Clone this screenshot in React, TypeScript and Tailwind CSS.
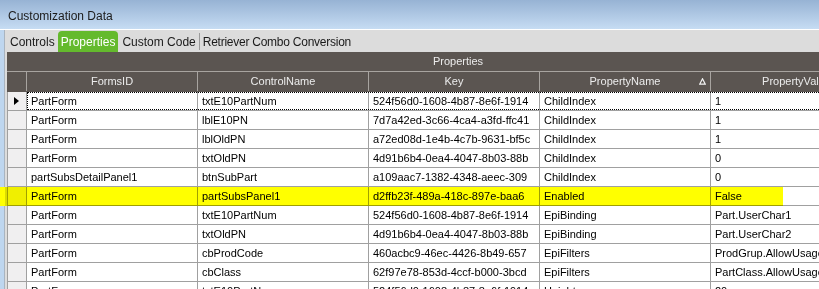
import React from "react";

type Row = [string, string, string, string, string];

const rows: Row[] = [
  ["PartForm", "txtE10PartNum", "524f56d0-1608-4b87-8e6f-1914", "ChildIndex", "1"],
  ["PartForm", "lblE10PN", "7d7a42ed-3c66-4ca4-a3fd-ffc41", "ChildIndex", "1"],
  ["PartForm", "lblOldPN", "a72ed08d-1e4b-4c7b-9631-bf5c", "ChildIndex", "1"],
  ["PartForm", "txtOldPN", "4d91b6b4-0ea4-4047-8b03-88b", "ChildIndex", "0"],
  ["partSubsDetailPanel1", "btnSubPart", "a109aac7-1382-4348-aeec-309", "ChildIndex", "0"],
  ["PartForm", "partSubsPanel1", "d2ffb23f-489a-418c-897e-baa6", "Enabled", "False"],
  ["PartForm", "txtE10PartNum", "524f56d0-1608-4b87-8e6f-1914", "EpiBinding", "Part.UserChar1"],
  ["PartForm", "txtOldPN", "4d91b6b4-0ea4-4047-8b03-88b", "EpiBinding", "Part.UserChar2"],
  ["PartForm", "cbProdCode", "460acbc9-46ec-4426-8b49-657", "EpiFilters", "ProdGrup.AllowUsage"],
  ["PartForm", "cbClass", "62f97e78-853d-4ccf-b000-3bcd", "EpiFilters", "PartClass.AllowUsage"],
  ["PartForm", "txtE10PartNum", "524f56d0-1608-4b87-8e6f-1914", "Height", "20"],
];

const widths = ["w-[171px]", "w-[171px]", "w-[171px]", "w-[171px]", "w-[172px]"];
const headers = ["FormsID", "ControlName", "Key", "PropertyName", "PropertyValue"];

function SortGlyph() {
  return (
    <svg width="7" height="7" viewBox="0 0 7 7" className="absolute right-[4px] top-[6px]">
      <path d="M3.5 0.8 L6.3 6.2 L0.7 6.2 Z" fill="none" stroke="#f2f2f2" strokeWidth="1.2" />
    </svg>
  );
}

function App() {
  return (
    <div className="relative w-[819px] h-[289px] overflow-hidden bg-[#dcdcdc] font-['Liberation_Sans',Arial,sans-serif]">
      {/* window title */}
      <div className="h-[30px] border-b border-white bg-gradient-to-b from-[#97b3d4] to-[#c6dcf3] pl-[8px] pt-[9px] text-[12px] leading-[14px] text-[#1b1b1b]">
        Customization Data
      </div>

      <div className="flex h-[259px]">
        <div className="w-[4px] shrink-0 bg-[#bed6ef]" />
        <div className="w-[1px] shrink-0 bg-[#a9b4c0]" />
        <div className="flex-1 min-w-0 flex flex-col">
          {/* tabs */}
          <div className="h-[22px] shrink-0 flex items-end pl-[2px] text-[12px] text-[#1a1a1a]">
            <div className="h-[21px] px-[3px] flex items-center">Controls</div>
            <div className="h-[21px] px-[3px] flex items-center rounded-t-[4px] bg-[#64ba2d] text-white">Properties</div>
            <div className="h-[21px] pl-[4px] pr-[3px] flex items-center">Custom Code</div>
            <div className="h-[17px] w-[1px] mb-[2px] bg-[#9a9a9a]" />
            <div className="h-[21px] px-[3px] flex items-center tracking-[-0.25px]">Retriever Combo Conversion</div>
          </div>

          {/* grid */}
          <div className="ml-[2px] flex-1 min-h-0 bg-white text-[11px] leading-[13px]">
            <div className="h-[20px] w-[902px] bg-[#5b5551] border-b border-[#a8a4a0] flex items-center justify-center text-[#ececec]">
              Properties
            </div>
            <div className="h-[20px] flex bg-[#5b5551] text-[#ececec] border-b border-[#5b5551]">
              <div className="w-[20px] shrink-0 border-r border-[#a8a4a0]" />
              {headers.map((h, i) => (
                <div
                  key={h}
                  className={`${widths[i]} relative shrink-0 border-r border-[#a8a4a0] flex items-center justify-center`}
                >
                  {h}
                  {i === 3 && <SortGlyph />}
                </div>
              ))}
            </div>
            {rows.map((r, ri) => (
              <div key={ri} className="h-[19px] flex border-b border-[#a0a0a0] border-l border-l-[#a0a0a0]">
                <div className="w-[19px] shrink-0 bg-[#f0eff0] border-r border-[#a0a0a0] flex items-center pl-[6px]">
                  {ri === 0 && (
                    <svg width="5" height="8" viewBox="0 0 5 8">
                      <path d="M0 0 L5 4 L0 8 Z" fill="#000" />
                    </svg>
                  )}
                </div>
                <div className={`flex ${ri === 0 ? "outline outline-1 outline-dotted outline-black -outline-offset-1" : ""}`}>
                  {r.map((c, ci) => (
                    <div
                      key={ci}
                      className={`${widths[ci]} shrink-0 border-r border-[#a0a0a0] pl-[4px] flex items-center whitespace-nowrap overflow-hidden text-black`}
                    >
                      {c}
                    </div>
                  ))}
                </div>
              </div>
            ))}
          </div>
        </div>
      </div>

      {/* marker highlight over the Enabled row */}
      <div className="absolute left-0 top-[187px] w-[783px] h-[19px] bg-[#ffff00] mix-blend-multiply" />
      <div className="absolute left-0 top-[187px] w-[5px] h-[19px] bg-[#ffff00]" />
    </div>
  );
}

export default App;
